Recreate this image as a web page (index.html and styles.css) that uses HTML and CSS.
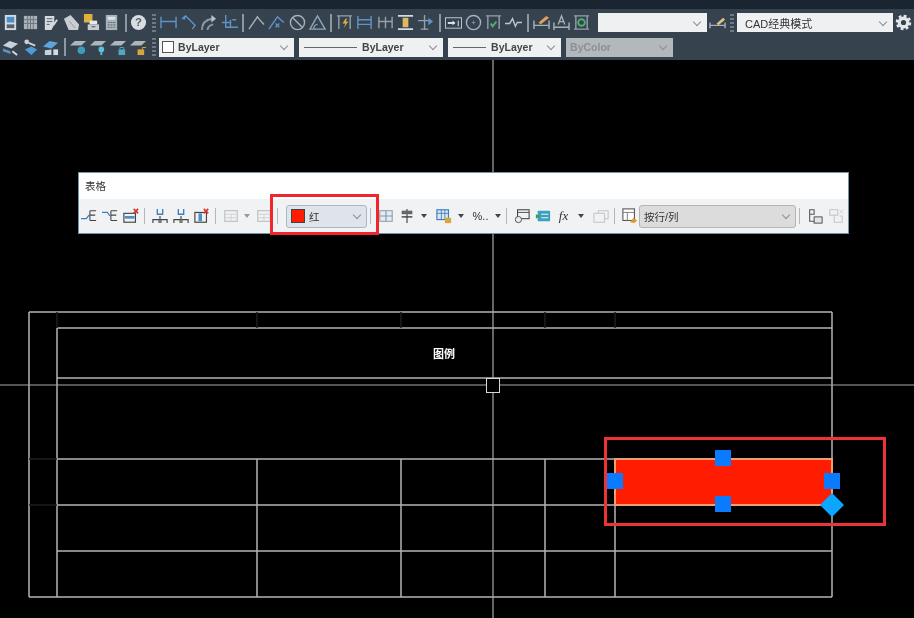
FILE: index.html
```html
<!DOCTYPE html>
<html lang="zh">
<head>
  <meta charset="UTF-8">
  <meta name="viewport" content="width=device-width, initial-scale=1.0">
  <title>表格 - CAD经典模式</title>
  <link rel="stylesheet" href="styles.css">
</head>
<body>

<svg class="defs" width="0" height="0">
  <defs>
    <symbol id="i-save" viewBox="0 0 18 18"><rect x="3" y="1" width="12" height="16" fill="#d3dae0"/><rect x="5" y="3" width="8" height="6" fill="#4d8fc9"/><rect x="5" y="11" width="8" height="4" fill="#56616e"/></symbol>
    <symbol id="i-sheet" viewBox="0 0 18 18"><rect x="2" y="2" width="14" height="14" fill="#aab3bb"/><path d="M6 2v14M9 2v14M12 2v14M2 6h14M2 10h14" stroke="#6d7680"/></symbol>
    <symbol id="i-doc" viewBox="0 0 18 18"><path d="M3 2h10v9l-3 6H3z" fill="#d4dae0"/><path d="M5 5h6M5 8h6M5 11h3" stroke="#4f5a67"/><path d="M16 6l-4 6" stroke="#d4dae0" stroke-width="2"/></symbol>
    <symbol id="i-tag" viewBox="0 0 18 18"><path d="M1 5l7-4 9 10-1 6H6z" fill="#c9ced3"/><path d="M7 8l6 7" stroke="#8d959d"/></symbol>
    <symbol id="i-print" viewBox="0 0 18 18"><rect x="1" y="0" width="9" height="9" fill="#e0b23c"/><rect x="7" y="7" width="8" height="4" fill="#e6e9ec"/><rect x="5" y="11" width="12" height="6" fill="#c7ccd2"/><rect x="9" y="13" width="4" height="1" fill="#444"/></symbol>
    <symbol id="i-calc" viewBox="0 0 18 18"><rect x="3" y="1" width="12" height="16" fill="#aab3bb"/><rect x="5" y="3" width="8" height="3" fill="#dfe3e6"/><path d="M5 9h8M5 11.500h8M5 14h8" stroke="#5c6672" stroke-dasharray="2 1"/></symbol>
    <symbol id="i-help" viewBox="0 0 18 18"><circle cx="9" cy="9" r="8" fill="#d8dde2"/><text x="9" y="13" text-anchor="middle" class="help-mark">?</text></symbol>
    <symbol id="i-dimh" viewBox="0 0 18 18"><path d="M1 3v12M17 3v12M1 8h16" fill="none" stroke="#5f93c4" stroke-width="1.500"/></symbol>
    <symbol id="i-diag" viewBox="0 0 18 18"><path d="M2 5l4-3 10 10-3 4M6 2l-2 4" fill="none" stroke="#5f93c4" stroke-width="1.500"/></symbol>
    <symbol id="i-arcd" viewBox="0 0 18 18"><path d="M2 17c0-8 4-11 11-12M8 17c0-3 2-5 6-6" fill="none" stroke="#8a98a6" stroke-width="2"/><path d="M12 1l5 4-5 4z" fill="#b7c0c8"/></symbol>
    <symbol id="i-ord" viewBox="0 0 18 18"><path d="M5 1v13H18M10 6v8M1 9h10M12 6h4" fill="none" stroke="#5f93c4" stroke-width="1.500"/></symbol>
    <symbol id="i-rad" viewBox="0 0 18 18"><path d="M1 16L10 3c2 3 5 6 7 8" fill="none" stroke="#a6b1bc" stroke-width="1.500"/></symbol>
    <symbol id="i-rad2" viewBox="0 0 18 18"><path d="M1 16L10 3c2 2 4 4 7 6M8 10l4 4M12 10l-4 4" fill="none" stroke="#5f93c4" stroke-width="1.500"/></symbol>
    <symbol id="i-dia" viewBox="0 0 18 18"><circle cx="9" cy="9" r="7.500" fill="none" stroke="#a6b1bc" stroke-width="1.500"/><path d="M4 4l10 10" stroke="#a6b1bc" stroke-width="1.500"/></symbol>
    <symbol id="i-ang" viewBox="0 0 18 18"><path d="M1 16h16L9 2zM5 16c0-3 2-5 4-5" fill="none" stroke="#8fa5ba" stroke-width="1.500"/></symbol>
    <symbol id="i-qdim" viewBox="0 0 18 18"><path d="M1 2h16M3 2v14M15 2v14" fill="none" stroke="#93a0ad" stroke-width="1.500"/><path d="M10 5l-3 5h3l-2 5 5-7h-3l2-3z" fill="#e3b23a"/></symbol>
    <symbol id="i-base" viewBox="0 0 18 18"><path d="M2 2v14M16 2v14M2 6h14M2 11h14" fill="none" stroke="#5f93c4" stroke-width="1.500"/></symbol>
    <symbol id="i-cont" viewBox="0 0 18 18"><path d="M2 3v12M9 3v12M16 3v12M2 8h14" fill="none" stroke="#93a0ad" stroke-width="1.500"/></symbol>
    <symbol id="i-space" viewBox="0 0 18 18"><path d="M1 2h16M1 16h16" stroke="#d3dae0" stroke-width="2"/><rect x="6" y="4" width="6" height="10" fill="#e0b860"/></symbol>
    <symbol id="i-brk" viewBox="0 0 18 18"><path d="M8 1v16M1 7h14M4 16h8" fill="none" stroke="#93a0ad" stroke-width="1.500"/><path d="M12 4l5 4-5 4z" fill="#5f93c4"/></symbol>
    <symbol id="i-tol" viewBox="0 0 18 18"><rect x="0.500" y="4" width="17" height="11" fill="none" stroke="#c3ccd6"/><path d="M3 9.500h7" stroke="#e4e7ea" stroke-width="2"/><path d="M8 7l3 2.500-3 2.500z" fill="#e4e7ea"/><path d="M14 7v6" stroke="#e4e7ea"/></symbol>
    <symbol id="i-cen" viewBox="0 0 18 18"><circle cx="9" cy="9" r="7.500" fill="none" stroke="#a6b1bc" stroke-width="1.500"/><path d="M9 7v4M7 9h4" stroke="#5f93c4"/></symbol>
    <symbol id="i-ins" viewBox="0 0 18 18"><path d="M1 2h16M3 2v14M15 2v14" fill="none" stroke="#93a0ad" stroke-width="1.500"/><path d="M6 10l2 3 4-5" fill="none" stroke="#4fb06a" stroke-width="2"/></symbol>
    <symbol id="i-jog" viewBox="0 0 18 18"><path d="M0 10h5l3-5 3 8 2-4h5" fill="none" stroke="#bcc5ce" stroke-width="1.500"/></symbol>
    <symbol id="i-edit" viewBox="0 0 18 18"><path d="M1 7v9M17 7v9M1 12h16" fill="none" stroke="#a6b1bc" stroke-width="1.500"/><path d="M6 9l8-7 3 2-9 7z" fill="#e0a15a"/></symbol>
    <symbol id="i-txt" viewBox="0 0 18 18"><path d="M1 9v8M17 9v8M1 14h16" fill="none" stroke="#a6b1bc" stroke-width="1.500"/><path d="M5.500 11L9 2l3.500 9M7 8h4" fill="none" stroke="#a6b1bc" stroke-width="1.400"/></symbol>
    <symbol id="i-upd" viewBox="0 0 18 18"><path d="M1 2h16M3 2v14M15 2v14M1 16h16" fill="none" stroke="#93a0ad" stroke-width="1.500"/><circle cx="9" cy="9" r="3.500" fill="none" stroke="#4fb06a" stroke-width="2"/></symbol>
    <symbol id="i-style" viewBox="0 0 18 18"><path d="M1 9v6M17 9v6M1 12h16" fill="none" stroke="#a6b1bc" stroke-width="1.500"/><path d="M8 10l7-6 2 2-7 6z" fill="#e0c080"/></symbol>
    <symbol id="i-l1" viewBox="0 0 18 18"><path d="M1 7l7-5 9 3-7 5z" fill="#c9d2da"/><path d="M1 10l8 3v3l-8-3z" fill="#5f93c4"/><path d="M11 13l5 4" stroke="#d4dae0" stroke-width="2"/></symbol>
    <symbol id="i-l2" viewBox="0 0 18 18"><circle cx="5" cy="3" r="2.500" fill="#c9d2da"/><path d="M7 4l7 3" stroke="#c9d2da" stroke-width="2"/><path d="M3 11l7-3 6 3-6 6z" fill="#4d9ad6"/></symbol>
    <symbol id="i-l3" viewBox="0 0 18 18"><path d="M1 8l7-6 9 2-7 6z" fill="#5da5de"/><path d="M3 12l7-1v6H3z" fill="#c9d2da"/><rect x="12" y="11" width="5" height="6" fill="#d4dae0"/></symbol>
    <symbol id="i-lay" viewBox="0 0 18 18"><path d="M0 7l5-5h12l-5 5z" fill="#aeb6bd"/><circle cx="12" cy="12" r="4" fill="#3f9cba"/></symbol>
    <symbol id="i-layb" viewBox="0 0 18 18"><path d="M0 7l5-5h12l-5 5z" fill="#aeb6bd"/><circle cx="12" cy="11" r="3" fill="#59c2dc"/><rect x="11" y="14" width="2" height="3" fill="#59c2dc"/></symbol>
    <symbol id="i-layl" viewBox="0 0 18 18"><path d="M0 7l5-5h12l-5 5z" fill="#aeb6bd"/><rect x="9" y="11" width="7" height="6" fill="#4fa7c4"/><path d="M10.500 11V9h4v2" fill="none" stroke="#4fa7c4"/></symbol>
    <symbol id="i-layu" viewBox="0 0 18 18"><path d="M0 7l5-5h12l-5 5z" fill="#aeb6bd"/><rect x="8" y="11" width="7" height="6" fill="#d9a53c"/><path d="M13 11V9h4" fill="none" stroke="#d9a53c"/></symbol>
    <symbol id="i-gear" viewBox="0 0 18 18"><circle cx="9" cy="9" r="4.500" fill="none" stroke="#e4e7ea" stroke-width="3.500"/><circle cx="9" cy="9" r="7" fill="none" stroke="#e4e7ea" stroke-width="2.500" stroke-dasharray="3 2.500"/></symbol>

    <symbol id="w-rowa" viewBox="0 0 18 18"><path d="M0 12h6l3-4" fill="none" stroke="#3b7fc0" stroke-width="1.400"/><path d="M10 3v11M10 3h7M10 8h6M10 14h7" fill="none" stroke="#444" stroke-width="1.200"/></symbol>
    <symbol id="w-rowb" viewBox="0 0 18 18"><path d="M0 5h6l3 4" fill="none" stroke="#3b7fc0" stroke-width="1.400"/><path d="M10 3v11M10 3h7M10 8h6M10 14h7" fill="none" stroke="#444" stroke-width="1.200"/></symbol>
    <symbol id="w-rowx" viewBox="0 0 18 18"><rect x="1" y="6" width="13" height="10" fill="none" stroke="#444" stroke-width="1.300"/><rect x="2" y="9" width="11" height="3" fill="#4d90c8"/><path d="M12 1l5 5M17 1l-5 5" stroke="#d8352a" stroke-width="1.800"/></symbol>
    <symbol id="w-cola" viewBox="0 0 18 18"><path d="M1 17v-4h7v4M10 17v-4h7v4M9 13V9" fill="none" stroke="#444" stroke-width="1.300"/><path d="M6 1v6h6V1" fill="none" stroke="#3b7fc0" stroke-width="1.500"/></symbol>
    <symbol id="w-colx" viewBox="0 0 18 18"><rect x="1" y="5" width="13" height="11" fill="none" stroke="#444" stroke-width="1.300"/><rect x="5" y="6" width="4" height="9" fill="#4d90c8"/><path d="M11 1l5 5M16 1l-5 5" stroke="#d8352a" stroke-width="1.800"/></symbol>
    <symbol id="w-grid" viewBox="0 0 18 18"><rect x="2" y="3" width="14" height="12" fill="none" stroke="#b4b8bc" stroke-width="1.300"/><path d="M2 7h14M2 11h14M9 7v8" stroke="#c6c9cc"/></symbol>
    <symbol id="w-cells" viewBox="0 0 18 18"><rect x="2" y="3" width="14" height="12" fill="#e9eaeb" stroke="#9ca6b0" stroke-width="1.300"/><path d="M9 3v12M2 9h14" stroke="#6f9cc4" stroke-width="1.300"/></symbol>
    <symbol id="w-align" viewBox="0 0 18 18"><path d="M9 1v16" stroke="#444" stroke-width="1.300"/><rect x="3" y="3" width="12" height="4" fill="#666"/><path d="M3 10h12" stroke="#444" stroke-width="1.600"/></symbol>
    <symbol id="w-lock" viewBox="0 0 18 18"><rect x="1" y="2" width="13" height="11" fill="#dfe8f0" stroke="#3b7fc0" stroke-width="1.300"/><path d="M1 6h13M6 2v11M10 2v11" stroke="#3b7fc0"/><rect x="10" y="11" width="7" height="6" fill="#d9a53c"/></symbol>
    <symbol id="w-block" viewBox="0 0 18 18"><rect x="4" y="2" width="13" height="10" fill="none" stroke="#444" stroke-width="1.200"/><path d="M4 5h13" stroke="#444"/><circle cx="5" cy="13" r="3.500" fill="#eee" stroke="#444"/></symbol>
    <symbol id="w-field" viewBox="0 0 18 18"><rect x="3" y="3" width="14" height="12" rx="1" fill="#3d9fc0"/><path d="M7 7h8M7 11h8" stroke="#fff"/><path d="M1 7l5 2-5 3z" fill="#37a04e"/></symbol>
    <symbol id="w-merge" viewBox="0 0 18 18"><rect x="1" y="6" width="12" height="10" fill="none" stroke="#bbbfc3" stroke-width="1.200"/><path d="M6 6V3h11v9h-4" fill="none" stroke="#bbbfc3" stroke-width="1.200"/></symbol>
    <symbol id="w-match" viewBox="0 0 18 18"><rect x="1" y="1" width="13" height="13" fill="#fff" stroke="#555" stroke-width="1.200"/><path d="M1 5h13M6 5v9" stroke="#777"/><path d="M9 16l4-5 4 3-3 3z" fill="#d99a2e"/></symbol>
    <symbol id="w-link" viewBox="0 0 18 18"><path d="M3 2h5v5H3zM3 7v8h6" fill="none" stroke="#555" stroke-width="1.200"/><rect x="8" y="10" width="9" height="7" fill="#e4e4e4" stroke="#444"/></symbol>
    <symbol id="w-unlink" viewBox="0 0 18 18"><path d="M2 2h9v6H2zM7 8v8h9V9h-3" fill="none" stroke="#bbbfc3" stroke-width="1.200"/><path d="M13 2l4 4M17 2l-4 4" stroke="#c6c9cc"/></symbol>
  </defs>
</svg>

<header class="toolbars">
  <div class="toolbar toolbar-top">
    <span class="ico"><svg><use href="#i-save"/></svg></span>
    <span class="ico"><svg><use href="#i-sheet"/></svg></span>
    <span class="ico"><svg><use href="#i-doc"/></svg></span>
    <span class="ico"><svg><use href="#i-tag"/></svg></span>
    <span class="ico"><svg><use href="#i-print"/></svg></span>
    <span class="ico"><svg><use href="#i-calc"/></svg></span>
    <span class="sep"></span>
    <span class="ico"><svg><use href="#i-help"/></svg></span>
    <span class="grip"></span>
    <span class="ico"><svg><use href="#i-dimh"/></svg></span>
    <span class="ico"><svg><use href="#i-diag"/></svg></span>
    <span class="ico"><svg><use href="#i-arcd"/></svg></span>
    <span class="ico"><svg><use href="#i-ord"/></svg></span>
    <span class="sep"></span>
    <span class="ico"><svg><use href="#i-rad"/></svg></span>
    <span class="ico"><svg><use href="#i-rad2"/></svg></span>
    <span class="ico"><svg><use href="#i-dia"/></svg></span>
    <span class="ico"><svg><use href="#i-ang"/></svg></span>
    <span class="sep"></span>
    <span class="ico"><svg><use href="#i-qdim"/></svg></span>
    <span class="ico"><svg><use href="#i-base"/></svg></span>
    <span class="ico"><svg><use href="#i-cont"/></svg></span>
    <span class="ico"><svg><use href="#i-space"/></svg></span>
    <span class="ico"><svg><use href="#i-brk"/></svg></span>
    <span class="sep"></span>
    <span class="ico"><svg><use href="#i-tol"/></svg></span>
    <span class="ico"><svg><use href="#i-cen"/></svg></span>
    <span class="ico"><svg><use href="#i-ins"/></svg></span>
    <span class="ico"><svg><use href="#i-jog"/></svg></span>
    <span class="sep"></span>
    <span class="ico"><svg><use href="#i-edit"/></svg></span>
    <span class="ico"><svg><use href="#i-txt"/></svg></span>
    <span class="ico"><svg><use href="#i-upd"/></svg></span>
    <div class="combo combo-dimstyle"><span class="combo-text"></span><span class="chev"></span></div>
    <span class="ico ico-box"><svg><use href="#i-style"/></svg></span>
    <span class="grip grip-right"></span>
    <div class="combo combo-workspace"><span class="combo-text">CAD经典模式</span><span class="chev"></span></div>
    <span class="ico ico-gear"><svg><use href="#i-gear"/></svg></span>
  </div>

  <div class="toolbar toolbar-bottom">
    <span class="ico"><svg><use href="#i-l1"/></svg></span>
    <span class="ico"><svg><use href="#i-l2"/></svg></span>
    <span class="ico"><svg><use href="#i-l3"/></svg></span>
    <span class="sep"></span>
    <span class="ico"><svg><use href="#i-lay"/></svg></span>
    <span class="ico"><svg><use href="#i-layb"/></svg></span>
    <span class="ico"><svg><use href="#i-layl"/></svg></span>
    <span class="ico"><svg><use href="#i-layu"/></svg></span>
    <span class="grip grip-right"></span>
    <div class="combo combo-color"><span class="swatch"></span><span class="combo-text">ByLayer</span><span class="chev"></span></div>
    <div class="combo combo-linetype"><span class="line"></span><span class="combo-text">ByLayer</span><span class="chev"></span></div>
    <div class="combo combo-lineweight"><span class="line"></span><span class="combo-text">ByLayer</span><span class="chev"></span></div>
    <div class="combo combo-plot"><span class="combo-text">ByColor</span><span class="chev"></span></div>
  </div>
</header>

<main class="canvas">
  <svg class="drawing" width="914" height="558" viewBox="0 60 914 558">
    <g class="tbl">
      <path d="M29 312H832M57 328H832M57 378H832M57 459H832M57 505H832M57 551H832M29 597H832"/>
      <path d="M29 312V597M57 328V597M832 312V597M257 459V597M401 459V597M545 459V597M615 459V597"/>
      <path class="tick" d="M57 312V328M257 312V328M401 312V328M545 312V328M615 312V328M29 459H57M29 505H57"/>
    </g>
    <text class="legend" x="444" y="358" text-anchor="middle">图例</text>
    <rect class="cell" x="615" y="459" width="217" height="46"/>
    <path class="cross" d="M0 385H486M500 385H914M493 60V378M493 393V618"/>
    <rect class="pickbox" x="486.500" y="378.500" width="13" height="14"/>
    <g class="grips">
      <rect x="715" y="450" width="16" height="16"/>
      <rect x="715" y="496" width="16" height="16"/>
      <rect x="607" y="473" width="16" height="16"/>
      <rect x="824" y="473" width="16" height="16"/>
    </g>
    <path class="grip-diamond" d="M832 493l12 12-12 12-12-12z"/>
    <rect class="mark" x="605.500" y="438.500" width="279" height="86"/>
  </svg>

  <section class="table-window">
    <div class="window-title">表格</div>
    <div class="window-tools">
      <span class="wico wico-first"><svg><use href="#w-rowa"/></svg></span>
      <span class="wico"><svg><use href="#w-rowb"/></svg></span>
      <span class="wico"><svg><use href="#w-rowx"/></svg></span>
      <span class="wsep"></span>
      <span class="wico"><svg><use href="#w-cola"/></svg></span>
      <span class="wico"><svg><use href="#w-cola"/></svg></span>
      <span class="wico"><svg><use href="#w-colx"/></svg></span>
      <span class="wsep"></span>
      <span class="wico wico-off"><svg><use href="#w-grid"/></svg></span>
      <span class="arrow arrow-off"></span>
      <span class="wico wico-off"><svg><use href="#w-grid"/></svg></span>
      <span class="wsep"></span>
      <div class="wcombo wcombo-color"><span class="red-swatch"></span><span class="wcombo-text">红</span><span class="chev"></span></div>
      <span class="wsep"></span>
      <span class="wico"><svg><use href="#w-cells"/></svg></span>
      <span class="wico"><svg><use href="#w-align"/></svg></span>
      <span class="arrow"></span>
      <span class="wico"><svg><use href="#w-lock"/></svg></span>
      <span class="arrow"></span>
      <span class="wico wico-text">%..</span>
      <span class="arrow"></span>
      <span class="wsep wsep-tight"></span>
      <span class="wico"><svg><use href="#w-block"/></svg></span>
      <span class="wico"><svg><use href="#w-field"/></svg></span>
      <span class="wico wico-text wico-fx">fx</span>
      <span class="arrow"></span>
      <span class="wico wico-off"><svg><use href="#w-merge"/></svg></span>
      <span class="wsep"></span>
      <span class="wico"><svg><use href="#w-match"/></svg></span>
      <div class="wcombo wcombo-rows"><span class="wcombo-text">按行/列</span><span class="chev"></span></div>
      <span class="wsep"></span>
      <span class="wico"><svg><use href="#w-link"/></svg></span>
      <span class="wico wico-off"><svg><use href="#w-unlink"/></svg></span>
    </div>
  </section>

  <div class="highlight"></div>
</main>

</body>
</html>
```

FILE: styles.css
```css
* {
  box-sizing: border-box;
}

html, body {
  margin: 0;
  height: 100%;
}

body {
  width: 914px;
  height: 618px;
  overflow: hidden;
  background: #000;
  font-family: 'Liberation Sans', 'Noto Sans CJK SC', sans-serif;
}

.defs {
  position: absolute;
}

.help-mark {
  fill: #56616e;
  font-family: 'Liberation Sans', sans-serif;
  font-size: 12px;
  font-weight: bold;
}

.toolbars {
  height: 60px;
  background: #37424f;
  border-top: 9px solid #1b2431;
  filter: blur(0.4px);
}

.toolbar {
  display: flex;
  align-items: center;
}

.toolbar-top {
  height: 27px;
}

.toolbar-bottom {
  height: 24px;
  margin-top: -1px;
}

.ico {
  display: flex;
  justify-content: center;
  align-items: center;
  width: 20.300px;
  height: 20px;
  flex: none;
}

.ico svg {
  width: 17px;
  height: 17px;
}

.sep {
  width: 2px;
  height: 18px;
  margin: 0 2px 0 3px;
  background: #8d98a3;
  flex: none;
}

.grip {
  width: 4px;
  height: 18px;
  margin: 0 2px 0 3px;
  flex: none;
  background: repeating-linear-gradient(to bottom, #6f7a86 0 2px, transparent 2px 4px);
}

.grip-right {
  margin: 0 3px;
}

.combo {
  display: flex;
  align-items: center;
  height: 19px;
  padding: 0 4px;
  background: #eef0f1;
  color: #444;
  font-size: 10.500px;
  font-weight: bold;
  flex: none;
}

.combo-text {
  flex: 1;
  white-space: nowrap;
}

.chev {
  width: 6px;
  height: 6px;
  margin: 0 3px 2px 0;
  border-right: 1px solid #8a8f94;
  border-bottom: 1px solid #8a8f94;
  transform: rotate(45deg);
  flex: none;
}

.combo-dimstyle {
  width: 109px;
  margin-left: 6px;
}

.ico-box {
  width: 20px;
}

.combo-workspace {
  width: 156px;
  padding-left: 8px;
  font-weight: normal;
  font-size: 11px;
  color: #333;
}

.ico-gear {
  width: 20px;
}

.combo-color {
  width: 135px;
  padding-left: 3px;
}

.swatch {
  width: 12px;
  height: 12px;
  margin-right: 4px;
  background: #fff;
  border: 1px solid #555;
  flex: none;
}

.combo-linetype {
  width: 144px;
  margin-left: 5px;
}

.combo-lineweight {
  width: 113px;
  margin-left: 5px;
}

.line {
  height: 1px;
  margin: 0 5px 0 1px;
  background: #666;
  flex: none;
}

.combo-linetype .line {
  width: 53px;
}

.combo-lineweight .line {
  width: 33px;
}

.combo-plot {
  width: 107px;
  margin-left: 5px;
  background: #b3b8bc;
  color: #8b9094;
}

.canvas {
  position: relative;
  height: 558px;
  background: #000;
}

.drawing {
  position: absolute;
  left: 0;
  top: 0;
  filter: blur(0.3px);
}

.tbl path {
  fill: none;
  stroke: #b4b4b4;
  stroke-width: 1.500;
}

.tbl .tick {
  stroke: #1e1e1e;
}

.legend {
  fill: #fff;
  font-family: 'Noto Sans CJK SC', sans-serif;
  font-size: 11px;
  font-weight: bold;
}

.cell {
  fill: #ff1c00;
  stroke: #f0a070;
  stroke-width: 2;
}

.cross {
  fill: none;
  stroke: #a8a8a8;
  stroke-width: 1.200;
}

.pickbox {
  fill: none;
  stroke: #d8d8d8;
  stroke-width: 1;
}

.grips rect {
  fill: #0a7bff;
}

.grip-diamond {
  fill: #0aa6ff;
}

.mark {
  fill: none;
  stroke: #ee3338;
  stroke-width: 3;
}

.table-window {
  position: absolute;
  left: 78px;
  top: 112px;
  width: 771px;
  height: 62px;
  background: #fff;
  border: 1px solid #6f95ad;
  filter: blur(0.4px);
}

.window-title {
  height: 26px;
  padding: 5px 0 0 6px;
  font-size: 10.500px;
  color: #333;
}

.window-tools {
  display: flex;
  align-items: center;
  height: 34px;
  background: #f1f2f3;
}

.wico {
  display: flex;
  justify-content: center;
  align-items: center;
  width: 21px;
  height: 20px;
  flex: none;
}

.wico svg {
  width: 16px;
  height: 16px;
}

.wico-first {
  margin-left: -1px;
}

.wico-off {
  opacity: 0.85;
}

.wico-text {
  font-size: 11px;
  color: #333;
}

.wico-fx {
  font-family: 'Liberation Serif', serif;
  font-style: italic;
  font-size: 13px;
}

.wsep {
  width: 1px;
  height: 16px;
  margin: 0 4px 0 3px;
  background: #b3b7bb;
  flex: none;
}

.wsep-tight {
  margin-left: -1px;
}

.arrow {
  width: 0;
  height: 0;
  margin: 0 6px 0 4px;
  border-left: 3.500px solid transparent;
  border-right: 3.500px solid transparent;
  border-top: 4px solid #444;
  flex: none;
}

.arrow-off {
  margin: 0 3px;
  border-top-color: #999;
}

.wcombo {
  display: flex;
  align-items: center;
  height: 23px;
  padding: 0 3px 0 4px;
  border: 1px solid #a9b8c6;
  border-radius: 3px;
  background: #dfe4ea;
  font-size: 10.500px;
  color: #333;
  flex: none;
}

.wcombo-text {
  flex: 1;
  white-space: nowrap;
}

.wcombo-color {
  width: 81px;
  margin-left: 4px;
}

.wcombo-rows {
  width: 157px;
  margin-left: -1px;
  background: #dcdcdc;
  border-color: #b4b4b4;
}

.red-swatch {
  width: 14px;
  height: 14px;
  margin-right: 4px;
  background: #ff1c00;
  border: 1px solid #444;
  flex: none;
}

.highlight {
  position: absolute;
  left: 270px;
  top: 134px;
  width: 109px;
  height: 41px;
  border: 3px solid #f0262c;
}
```
